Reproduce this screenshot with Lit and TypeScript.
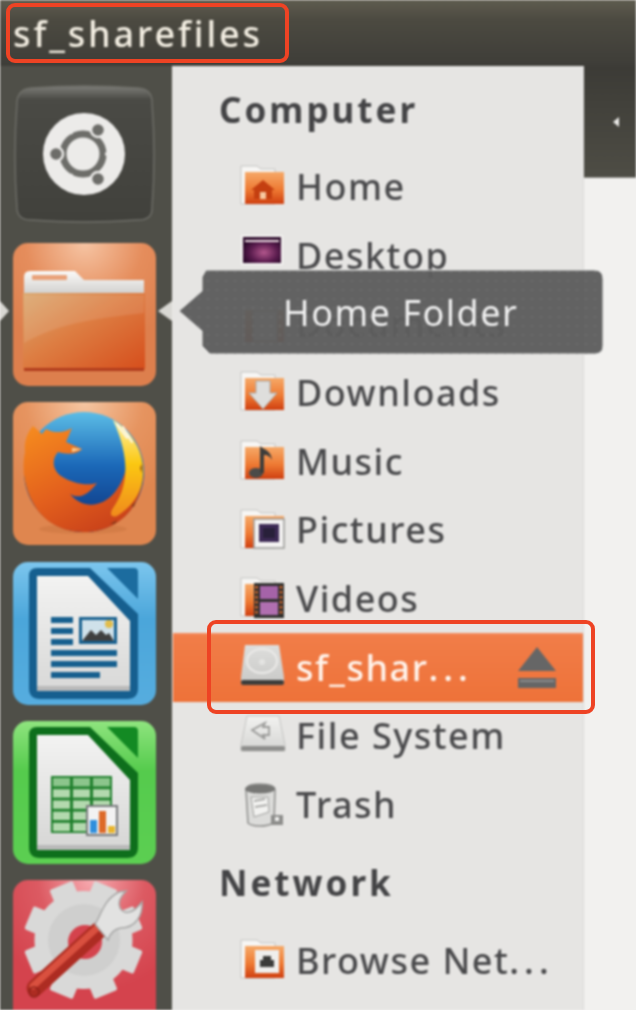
import { LitElement, html, css, svg } from "lit";
import { customElement } from "lit/decorators.js";

const docPage = (dark: string, mid: string, page: string) => svg`
  <path d="M24 6 H77 L125 52 V126 Q125 137 114 137 H27 Q16 137 16 126 V14 Q16 6 24 6Z" fill="${dark}"/>
  <path d="M24 14 H75 L117 59 V129 H24Z" fill="url(#${page})"/>
  <path d="M24 124 H117 V129 H24Z" fill="#b9b9b9"/>
  <path d="M94 6 H121 Q125 6 125 10 V37Z" fill="${mid}"/>`;

const placeIcons: Record<string, unknown> = {
  home: svg`<path d="M23 17 L35 27 H32 V36 H14 V27 H11Z" fill="#c43f10"/><rect x="20" y="29" width="6" height="7" fill="#f7c9a0"/>`,
  downloads: svg`<path d="M16 12 H30 V24 H37 L23 40 L9 24 H16Z" fill="#dededc" stroke="#a9a9a7" stroke-width="1"/>`,
  music: svg`<ellipse cx="16" cy="35" rx="7" ry="5" fill="#4b4b49"/><path d="M20 35 V8 C24 12 31 12 32 22 C29 17 26 17 24 17 V35Z" fill="#3d3d3b"/>`,
  pictures: svg`<rect x="14" y="12" width="30" height="29" fill="#f4f3f2" stroke="#9a9a98" stroke-width="1.5"/><rect x="19" y="17" width="20" height="18" fill="#3d2a55"/><rect x="23" y="21" width="12" height="10" fill="#28203a"/>`,
  videos: svg`<rect x="14" y="8" width="30" height="35" fill="#30302e"/><rect x="20" y="11" width="18" height="13" fill="#a563a8"/><rect x="20" y="27" width="18" height="13" fill="#b06fb0"/><path d="M16.5 11 V41 M41 11 V41" stroke="#e36d2e" stroke-width="2.5" stroke-dasharray="2.5 2.5"/>`,
  browse: svg`<rect x="15" y="13" width="24" height="23" fill="#efeeec"/><path d="M20 30 V23 H23 V19 H31 V23 H34 V30Z" fill="#3b3b39"/>`,
  documents: svg`<rect x="13" y="10" width="24" height="30" fill="#f1f0ee" stroke="#aaa" stroke-width="1"/>`,
};

@customElement("app-root")
export class AppRoot extends LitElement {
  static styles = css`
    :host { display: block; width: 636px; height: 1010px; overflow: hidden; position: relative; background: #f2f1ef; font-family: "Noto Sans", "Open Sans", sans-serif; }
    .soft { filter: blur(0.8px); display: flex; flex-direction: column; height: 1010px; }
    .title { height: 66px; flex: none; box-sizing: border-box; padding-left: 13px; display: flex; align-items: center; background: linear-gradient(#5f5c4f, #4c4a41 30%, #3e3d38); color: #f3eee2; font-size: 36px; font-weight: 500; letter-spacing: 2.9px; }
    .body { flex: 1; display: flex; min-height: 0; }
    .launcher { width: 172px; flex: none; box-sizing: border-box; padding: 18px 0 0 13px; background: #4f4f48; display: flex; flex-direction: column; gap: 16.2px; overflow: hidden; position: relative; }
    .tile { width: 143px; height: 143px; flex: none; display: block; }
    .pip { position: absolute; width: 0; height: 0; top: 235px; border-top: 10px solid transparent; border-bottom: 10px solid transparent; }
    .pip.l { left: 0; border-left: 9px solid #d9d8d3; }
    .pip.r { left: 158px; border-right: 14px solid #d9d8d3; }
    .side { width: 412px; flex: none; box-sizing: border-box; background: #e6e5e3; border-left: 1.5px solid #e9e8e6; border-right: 1.5px solid #dcdbd9; overflow: hidden; }
    .head { height: 86px; box-sizing: border-box; display: flex; align-items: center; padding-left: 46px; font-size: 35px; font-weight: 700; letter-spacing: 3px; color: #444446; }
    .head.net { height: 87px; }
    .row { height: 68.7px; box-sizing: border-box; display: flex; align-items: center; gap: 10px; padding-left: 67px; font-size: 36px; font-weight: 500; letter-spacing: 1.5px; color: #4a4a4c; white-space: nowrap; }
    .row svg { width: 46px; height: 46px; flex: none; }
    .row.sel { background: linear-gradient(#f58a5c, #f17d48 5%, #ee7239); color: #fff4ec; position: relative; }
    .row svg.eject { position: absolute; left: 344px; top: 14px; width: 40px; height: 42px; }
    .dots { letter-spacing: 5px; }
    .right { flex: 1; display: flex; flex-direction: column; }
    .tool { height: 112px; flex: none; box-sizing: border-box; background: linear-gradient(#3c3b36, #4e4d45); border-bottom: 1.5px solid #8e8d87; display: flex; align-items: center; padding-left: 29px; }
    .tri { width: 0; height: 0; border-top: 5.5px solid transparent; border-bottom: 5.5px solid transparent; border-right: 6px solid #ecebe8; }
    .pane { flex: 1; background: #f2f1ef; }
    .tip { position: absolute; left: 178px; top: 269px; width: 426px; height: 86px; }
    .tipshape { position: absolute; inset: 0; width: 100%; height: 100%; }
    .tiptext { position: absolute; left: 105px; top: 0; height: 86px; display: flex; align-items: center; color: #f1f1f1; font-size: 36px; letter-spacing: 1.5px; }
    .box { position: absolute; box-sizing: border-box; border: 4px solid #ee4324; border-radius: 9px; }
    .box.a { left: 6px; top: 3px; width: 283px; height: 60px; }
    .box.b { left: 207px; top: 620px; width: 388px; height: 94px; }
  `;

  private folder(kind: string) {
    return html`<svg viewBox="0 0 46 46">
      <defs><linearGradient id="f-${kind}" x1="0" y1="0" x2="0" y2="1"><stop offset="0" stop-color="#f6a968"/><stop offset=".55" stop-color="#ee7a33"/><stop offset="1" stop-color="#cf3f10"/></linearGradient></defs>
      <path d="M1 3 H17 L21 6 H35 V41 H1Z" fill="#f7f6f4" stroke="#c4c3c1" stroke-width="1"/>
      <rect x="5" y="9" width="39" height="32" fill="url(#f-${kind})"/>
      ${placeIcons[kind]}
    </svg>`;
  }

  private desktopIcon() {
    return html`<svg viewBox="0 0 46 46">
      <defs><radialGradient id="dk" cx=".55" cy=".6" r=".6"><stop offset="0" stop-color="#b3578d"/><stop offset=".6" stop-color="#5a1c4e"/><stop offset="1" stop-color="#2b0a2a"/></radialGradient></defs>
      <rect x="1" y="3" width="42" height="30" fill="#f3f2f0"/><rect x="3" y="5" width="38" height="26" fill="url(#dk)"/>
      <rect x="5" y="8" width="34" height="2" fill="#efdfe6"/>
    </svg>`;
  }

  private driveIcon() {
    return html`<svg viewBox="0 0 46 46">
      <defs><linearGradient id="dr" x1="0" y1="0" x2="0" y2="1"><stop offset="0" stop-color="#dededc"/><stop offset="1" stop-color="#c9c9c7"/></linearGradient></defs>
      <path d="M5 1 H39 L44 33 V40 H1 V33Z" fill="url(#dr)"/><ellipse cx="22" cy="17" rx="15" ry="12" fill="none" stroke="#ecebe9" stroke-width="2"/>
      <circle cx="22" cy="18" r="3" fill="#e4e4e2"/><rect x="1" y="36" width="43" height="5" rx="2" fill="#3d3d3b"/>
    </svg>`;
  }

  private fsIcon() {
    return html`<svg viewBox="0 0 46 46">
      <defs><linearGradient id="fs" x1="0" y1="0" x2="0" y2="1"><stop offset="0" stop-color="#f2f2f0"/><stop offset="1" stop-color="#d5d5d3"/></linearGradient></defs>
      <path d="M7 3 H39 L45 32 V38 H1 V32Z" fill="url(#fs)" stroke="#c5c5c3" stroke-width="1"/>
      <rect x="1" y="33" width="44" height="5" rx="2" fill="#8f8f8d"/>
      <path d="M12 17 L25 10 L23 14 H29 V22 H23 L25 26Z" fill="none" stroke="#9b9b99" stroke-width="1.8"/>
    </svg>`;
  }

  private trashIcon() {
    return html`<svg viewBox="0 0 46 46">
      <path d="M6 8 Q6 2 20 2 Q35 2 35 8 L34 41 Q28 44 20 44 Q11 44 8 41Z" fill="#dcdcda" stroke="#8f8f8d" stroke-width="1.5"/>
      <ellipse cx="20" cy="7" rx="15" ry="4.5" fill="#777775"/>
      <path d="M11 15 H28 L29 30 L14 35Z" fill="#f2f2f0" stroke="#a0a09e" stroke-width="1"/>
      <path d="M14 19 L25 17 M15 25 L27 23" stroke="#9a9a98" stroke-width="1.4"/>
      <rect x="31" y="33" width="12" height="10" fill="#8d8d8b"/><rect x="35" y="35" width="4" height="4" fill="#efefed"/>
    </svg>`;
  }

  private dash() {
    return html`<svg class="tile" viewBox="0 0 143 143">
      <defs><linearGradient id="dt" x1="0" y1="0" x2="0" y2="1"><stop offset="0" stop-color="#7d7d78"/><stop offset=".1" stop-color="#4a4a45"/><stop offset="1" stop-color="#41413c"/></linearGradient></defs>
      <path d="M18 4 Q71 0 125 4 Q139 5 139 18 Q143 71 139 125 Q139 136 125 136 Q71 140 18 136 Q5 136 4 125 Q0 71 4 18 Q5 5 18 4Z" fill="url(#dt)" stroke="#6f6f69" stroke-width="1.4"/>
      <circle cx="71" cy="70" r="41" fill="#ecebe9"/>
      <circle cx="70" cy="70" r="20" fill="none" stroke="#6d6d69" stroke-width="7"/>
      <g stroke="#ecebe9" stroke-width="3"><path d="M92 70 H98"/><path d="M59 50 L54 42"/><path d="M59 90 L54 98"/></g>
      <g fill="#6d6d69" stroke="#ecebe9" stroke-width="2.5"><circle cx="85" cy="46" r="7"/><circle cx="43" cy="70" r="7"/><circle cx="85" cy="95" r="7"/></g>
    </svg>`;
  }

  private homeTile() {
    return html`<svg class="tile" viewBox="0 0 143 143">
      <defs>
        <radialGradient id="ot" cx=".5" cy="0" r=".75"><stop offset="0" stop-color="#f6c4a3"/><stop offset=".55" stop-color="#e58d5c"/><stop offset="1" stop-color="#dd7f4d"/></radialGradient>
        <linearGradient id="fb" x1="0" y1="0" x2="1" y2="1"><stop offset="0" stop-color="#dba76e"/><stop offset=".45" stop-color="#dd7d42"/><stop offset="1" stop-color="#d64d1b"/></linearGradient>
        <linearGradient id="pp" x1="0" y1="0" x2="0" y2="1"><stop offset="0" stop-color="#fbfaf8"/><stop offset="1" stop-color="#cfcecc"/></linearGradient>
      </defs>
      <rect width="143" height="143" rx="15" fill="url(#ot)"/>
      <path d="M11 34 Q11 28 17 28 H62 L71 37 H131 V52 H11Z" fill="url(#pp)"/>
      <rect x="19" y="32" width="35" height="5" rx="1" fill="#e9a27a"/>
      <path d="M10 50 H132 V124 Q132 128 128 128 H14 Q10 128 10 124Z" fill="url(#fb)"/>
      <path d="M11 100 C50 78 90 75 131 70 V52 H11Z" fill="#fff" opacity=".1"/>
      <rect x="11" y="125" width="120" height="3" fill="#b03c1d"/>
    </svg>`;
  }

  private firefox() {
    return html`<svg class="tile" viewBox="0 0 143 143">
      <defs>
        <radialGradient id="ft" cx=".5" cy="0" r=".75"><stop offset="0" stop-color="#f5c6a2"/><stop offset=".55" stop-color="#e69460"/><stop offset="1" stop-color="#df864f"/></radialGradient>
        <linearGradient id="gb" x1="0" y1="0" x2="0" y2="1"><stop offset="0" stop-color="#5cbde6"/><stop offset=".45" stop-color="#1b68b8"/><stop offset="1" stop-color="#0d2f78"/></linearGradient>
        <linearGradient id="fx" x1=".1" y1="0" x2=".7" y2="1"><stop offset="0" stop-color="#f58a1f"/><stop offset=".55" stop-color="#e3601d"/><stop offset="1" stop-color="#c8401a"/></linearGradient>
        <linearGradient id="fl" x1="0" y1="0" x2="0" y2="1"><stop offset="0" stop-color="#fff2a8"/><stop offset=".45" stop-color="#fbc812"/><stop offset="1" stop-color="#f08a1c"/></linearGradient>
      </defs>
      <rect width="143" height="143" rx="15" fill="url(#ft)"/>
      <ellipse cx="70" cy="127" rx="44" ry="5" fill="#b5622f" opacity=".25"/>
      <circle cx="71" cy="70" r="60" fill="url(#gb)"/>
      <path d="M59 26 C54 29 44 33 33 27 L29 32 L20 24 C13 32 11 42 12 50 C5 84 23 130 71 130 C106 130 130 104 130 70 C130 52 122 36 109 26 C119 48 115 74 102 90 C90 105 70 108 57 92 C66 98 76 92 84 81 C75 84 60 82 48 74 C40 68 38 58 45 50 C55 53 65 52 69 47 L53 40 Z" fill="url(#fx)"/>
      <path d="M100 18 C120 30 132 52 130 74 C129 90 120 104 104 114 C98 116 96 112 100 106 C110 92 122 66 100 18 Z" fill="url(#fl)"/>
      <path d="M104 22 L114 36 M110 25 L119 40" stroke="#fbfaf0" stroke-width="2" stroke-linecap="round"/>
      <path d="M59 46 L69 47 L59 50Z" fill="#f6d19a"/>
      <path d="M127 66 l2 -4 v9z M97 122 l7 -4 l-2 4z M118 104 l5 -5 l-2 6z" fill="#7a3a1a" opacity=".8"/>
    </svg>`;
  }

  private writer() {
    return html`<svg class="tile" viewBox="0 0 143 143">
      <defs>
        <linearGradient id="wb" x1="0" y1="0" x2="0" y2="1"><stop offset="0" stop-color="#7cc6ee"/><stop offset=".4" stop-color="#4ba6da"/><stop offset="1" stop-color="#56addf"/></linearGradient>
        <linearGradient id="wp" x1="0" y1="0" x2="0" y2="1"><stop offset="0" stop-color="#f3f3f2"/><stop offset="1" stop-color="#d8d8d7"/></linearGradient>
      </defs>
      <rect width="143" height="143" rx="15" fill="url(#wb)"/>
      ${docPage("#165f8f", "#1c6c9f", "wp")}
      <g fill="#17608f">
        <rect x="38" y="55" width="22" height="6"/><rect x="38" y="66" width="22" height="6"/><rect x="38" y="77" width="22" height="6"/>
        <rect x="38" y="88" width="66" height="6"/><rect x="38" y="99" width="66" height="6"/><rect x="38" y="110" width="49" height="6"/>
        <rect x="66" y="55" width="38" height="27"/>
      </g>
      <rect x="69" y="58" width="32" height="21" fill="#cfe1ea"/>
      <circle cx="96" cy="62" r="4" fill="#e2bd4c"/>
      <path d="M69 79 L78 68 L83 73 L88 68 L93 73 L96 71 L101 79Z" fill="#3f3f3f"/>
    </svg>`;
  }

  private calc() {
    const cells = [];
    for (let r = 0; r < 5; r++)
      for (let c = 0; c < 3; c++)
        cells.push(svg`<rect x="${40 + c * 20}" y="${57 + r * 11.2}" width="17" height="8.4" fill="${r === 0 ? "#8cc58c" : "#b3d9ae"}"/>`);
    return html`<svg class="tile" viewBox="0 0 143 143">
      <defs>
        <linearGradient id="cb" x1="0" y1="0" x2="0" y2="1"><stop offset="0" stop-color="#8fe47f"/><stop offset=".35" stop-color="#55cb4d"/><stop offset="1" stop-color="#5ccf52"/></linearGradient>
        <linearGradient id="cp" x1="0" y1="0" x2="0" y2="1"><stop offset="0" stop-color="#f3f3f2"/><stop offset="1" stop-color="#d6d6d5"/></linearGradient>
      </defs>
      <rect width="143" height="143" rx="15" fill="url(#cb)"/>
      ${docPage("#0e6f1c", "#138a23", "cp")}
      <rect x="38" y="55" width="61" height="57" fill="#1f7f2c"/>
      ${cells}
      <rect x="74" y="85" width="30" height="29" fill="#f2f2f2" stroke="#77797b" stroke-width="2"/>
      <rect x="77" y="99" width="7" height="13" fill="#2f8fdc"/>
      <rect x="86" y="90" width="7" height="22" fill="#dd6a28"/>
      <rect x="95" y="105" width="7" height="7" fill="#e9b52d"/>
    </svg>`;
  }

  private settings() {
    const teeth = [];
    for (let i = 0; i < 8; i++)
      teeth.push(svg`<rect x="58" y="1" width="25" height="24" rx="2" fill="#d9d9d8" transform="rotate(${i * 45 + 22.5} 70.5 60)"/>`);
    return html`<svg class="tile" viewBox="0 0 143 143">
      <defs>
        <radialGradient id="st" cx=".55" cy="0" r=".75"><stop offset="0" stop-color="#f7aab0"/><stop offset=".5" stop-color="#dc5a62"/><stop offset="1" stop-color="#d4434d"/></radialGradient>
      </defs>
      <rect width="143" height="150" rx="15" fill="url(#st)"/>
      ${teeth}
      <circle cx="70.5" cy="60" r="49" fill="#d9d9d8"/>
      <circle cx="71" cy="60" r="36" fill="#cfcfce"/>
      <circle cx="72" cy="62" r="17" fill="#d4434d"/>
      <path d="M22 108 L86 50" stroke="#ad2c22" stroke-width="17" stroke-linecap="round"/>
      <path d="M20 106 L84 48" stroke="#d9503f" stroke-width="7" stroke-linecap="round"/>
      <circle cx="21" cy="112" r="5" fill="none" stroke="#8f2119" stroke-width="1.5"/>
      <path d="M82 44 C88 36 90 20 106 12 L113 11 C108 16 104 22 107 28 C111 35 120 34 129 22 C130 36 122 48 108 48 C100 49 97 54 95 60 Z" fill="#e2e2e1" stroke="#a8a8a7" stroke-width="1.5"/>
    </svg>`;
  }

  render() {
    return html`
      <div class="soft">
        <div class="title"><span>sf_sharefiles</span></div>
        <div class="body">
          <div class="launcher">
            ${this.dash()}${this.homeTile()}${this.firefox()}${this.writer()}${this.calc()}${this.settings()}
            <div class="pip l"></div><div class="pip r"></div>
          </div>
          <div class="side">
            <div class="head">Computer</div>
            <div class="row">${this.folder("home")}<span>Home</span></div>
            <div class="row">${this.desktopIcon()}<span>Desktop</span></div>
            <div class="row">${this.folder("documents")}<span>Documents</span></div>
            <div class="row">${this.folder("downloads")}<span>Downloads</span></div>
            <div class="row">${this.folder("music")}<span>Music</span></div>
            <div class="row">${this.folder("pictures")}<span>Pictures</span></div>
            <div class="row">${this.folder("videos")}<span>Videos</span></div>
            <div class="row sel">${this.driveIcon()}<span>sf_shar<span class="dots">...</span></span>
              <svg class="eject" viewBox="0 0 40 42"><path d="M20 0 L39 24 H1Z" fill="#666"/><rect x="1" y="31" width="38" height="10" fill="#666"/><rect x="3" y="33" width="34" height="2" fill="#8a8a8a"/></svg>
            </div>
            <div class="row">${this.fsIcon()}<span>File System</span></div>
            <div class="row">${this.trashIcon()}<span>Trash</span></div>
            <div class="head net">Network</div>
            <div class="row">${this.folder("browse")}<span>Browse Net<span class="dots">...</span></span></div>
          </div>
          <div class="right">
            <div class="tool"><div class="tri"></div></div>
            <div class="pane"></div>
          </div>
        </div>
        <div class="tip">
          <svg class="tipshape" viewBox="0 0 426 86">
            <defs><pattern id="dots" width="9" height="9" patternUnits="userSpaceOnUse"><circle cx="3" cy="3" r="1" fill="#777"/></pattern></defs>
            <path d="M28 1 H416 Q425 1 425 10 V77 Q425 85 416 85 H32 L24 77 V62 L1 42 L24 22 V8Z" fill="#5d5d5d" fill-opacity=".96" stroke="#e8e8e6" stroke-width="1"/>
            <path d="M28 1 H416 Q425 1 425 10 V77 Q425 85 416 85 H32 L24 77 V62 L1 42 L24 22 V8Z" fill="url(#dots)" opacity=".7"/>
          </svg>
          <div class="tiptext">Home Folder</div>
        </div>
      </div>
      <div class="box a"></div>
      <div class="box b"></div>
    `;
  }
}
